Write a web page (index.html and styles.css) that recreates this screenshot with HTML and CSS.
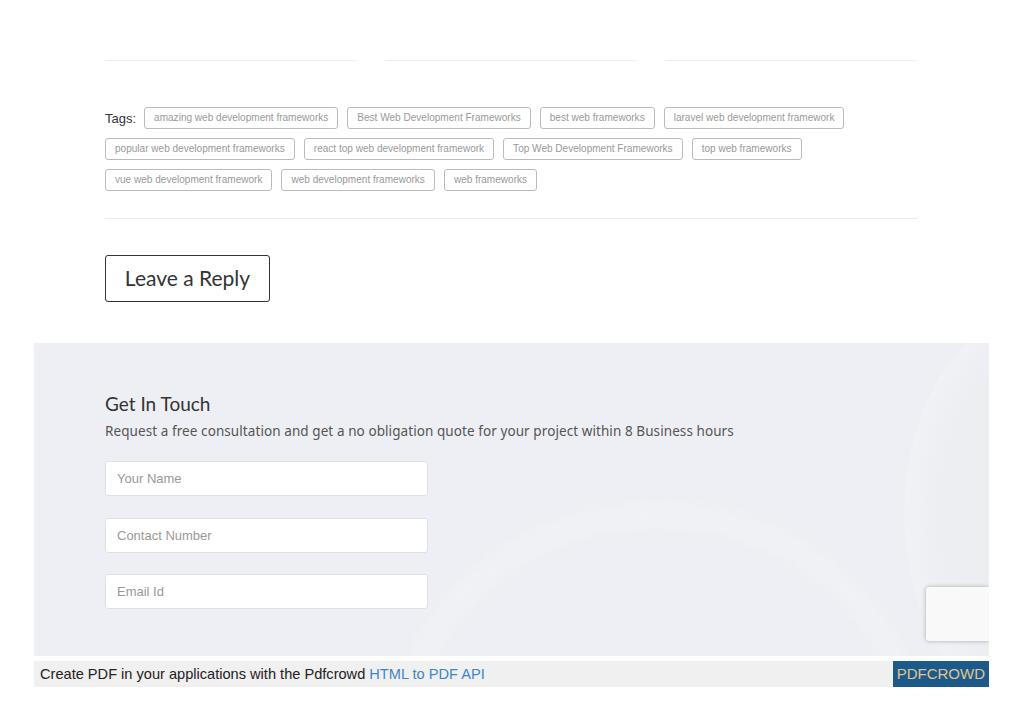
FILE: index.html
```html
<!DOCTYPE html>
<html lang="en">
<head>
<meta charset="UTF-8" />
<meta name="viewport" content="width=device-width, initial-scale=1.0"/>
<title>Top Web Development Frameworks</title>
<link rel="stylesheet" href="styles.css">
</head>
<body>

<div class="post-footer">
  <div class="post-nav">
    <span></span>
    <span></span>
    <span></span>
  </div>

  <div class="tags">
    <span class="tags-label">Tags:</span>
    <a href="#">amazing web development frameworks</a>
    <a href="#">Best Web Development Frameworks</a>
    <a href="#">best web frameworks</a>
    <a href="#">laravel web development framework</a>
    <a href="#">popular web development frameworks</a>
    <a href="#">react top web development framework</a>
    <a href="#">Top Web Development Frameworks</a>
    <a href="#">top web frameworks</a>
    <a href="#">vue web development framework</a>
    <a href="#">web development frameworks</a>
    <a href="#">web frameworks</a>
  </div>

  <div class="reply">
    <button class="reply-btn">Leave a Reply</button>
  </div>
</div>

<section class="contact">
  <div class="contact-inner">
    <h2>Get In Touch</h2>
    <p>Request a free consultation and get a no obligation quote for your project within 8 Business hours</p>
    <form class="contact-form">
      <input type="text" placeholder="Your Name" />
      <input type="text" placeholder="Contact Number" />
      <input type="text" placeholder="Email Id" />
    </form>
  </div>
  <div class="recaptcha"></div>
</section>

<div class="pdf-bar">
  <span>Create PDF in your applications with the Pdfcrowd <a href="#">HTML to PDF API</a></span>
  <a class="pdf-brand" href="#">PDFCROWD</a>
</div>

</body>
</html>
```

FILE: styles.css
```css
body {
  margin: 0;
  background: #fff;
  font-family: "Liberation Sans", Arial, sans-serif;
  color: #333;
}
.post-footer {
  width: 813px;
  margin-left: 105px;
  padding-top: 60px;
}
.post-nav {
  display: grid;
  grid-template-columns: repeat(3, 252px);
  gap: 28px;
}
.post-nav span {
  height: 1px;
  background: #ededed;
}
.tags {
  display: flex;
  flex-wrap: wrap;
  align-items: center;
  gap: 9px;
  margin-top: 46px;
  padding-bottom: 27px;
  border-bottom: 1px solid #ebebeb;
  width: 760px;
  padding-right: 53px;
}
.tags-label {
  font-size: 13px;
  color: #333;
  margin-right: -1px;
}
.tags a {
  font-size: 10.05px;
  line-height: 12px;
  color: #999;
  text-decoration: none;
  border: 1px solid #bbb;
  border-radius: 3px;
  padding: 4px 9px;
}
.reply {
  padding: 36px 0 41px;
}
.reply-btn {
  font-family: Lato, "Noto Sans", sans-serif;
  font-size: 21px;
  line-height: 1;
  color: #333;
  background: #fff;
  border: 1px solid #333;
  border-radius: 3px;
  width: 165px;
  height: 47px;
  padding: 0 0 2px;
  cursor: pointer;
}
.contact {
  position: relative;
  overflow: hidden;
  margin: 0 34px;
  height: 313px;
  background: #eeeff4;
}
/* faint background swirls */
.contact::before {
  content: "";
  position: absolute;
  left: 870px;
  top: -40px;
  width: 300px;
  height: 420px;
  border-radius: 50%;
  background: #eceef2;
  box-shadow: inset 18px 0 30px #f1f2f6;
}
.contact::after {
  content: "";
  position: absolute;
  left: 360px;
  top: 160px;
  width: 480px;
  height: 420px;
  border-radius: 50%;
  border: 24px solid #f0f1f5;
  filter: blur(6px);
}
.contact-inner {
  position: relative;
  z-index: 1;
  padding: 49px 0 0 71px;
}
.contact h2 {
  font-family: Lato, "Noto Sans", sans-serif;
  font-weight: 400;
  font-size: 19px;
  color: #333;
  margin: 0 0 7px;
}
.contact p {
  font-family: "Noto Sans", sans-serif;
  font-size: 13.5px;
  letter-spacing: 0.08px;
  color: #555;
  margin: 0 0 21px;
}
.contact-form {
  display: flex;
  flex-direction: column;
  gap: 21.5px;
  width: 323px;
}
.contact-form input {
  height: 35px;
  box-sizing: border-box;
  border: 1px solid #dfe0e4;
  border-radius: 3px;
  background: #fff;
  padding: 0 11px;
  font-family: "Liberation Sans", Arial, sans-serif;
  font-size: 13px;
}
.contact-form input::placeholder {
  color: #999;
}
.recaptcha {
  position: absolute;
  z-index: 2;
  right: 0;
  top: 244px;
  width: 63px;
  height: 54px;
  background: #f9f9f9;
  border-radius: 3px 0 0 3px;
  box-shadow: 0 0 4px rgba(0,0,0,0.3);
}
.pdf-bar {
  display: flex;
  align-items: center;
  justify-content: space-between;
  margin: 5px 34px 0;
  height: 26px;
  background: #f0f0f0;
  font-size: 14.6px;
  color: #222;
  padding-left: 6px;
}
.pdf-bar a {
  color: #3e86c8;
  text-decoration: none;
}
.pdf-bar .pdf-brand {
  height: 26px;
  line-height: 26px;
  padding: 0 4px;
  font-size: 15px;
  background: #1d5a8c;
  color: #e2c58a;
}
```
